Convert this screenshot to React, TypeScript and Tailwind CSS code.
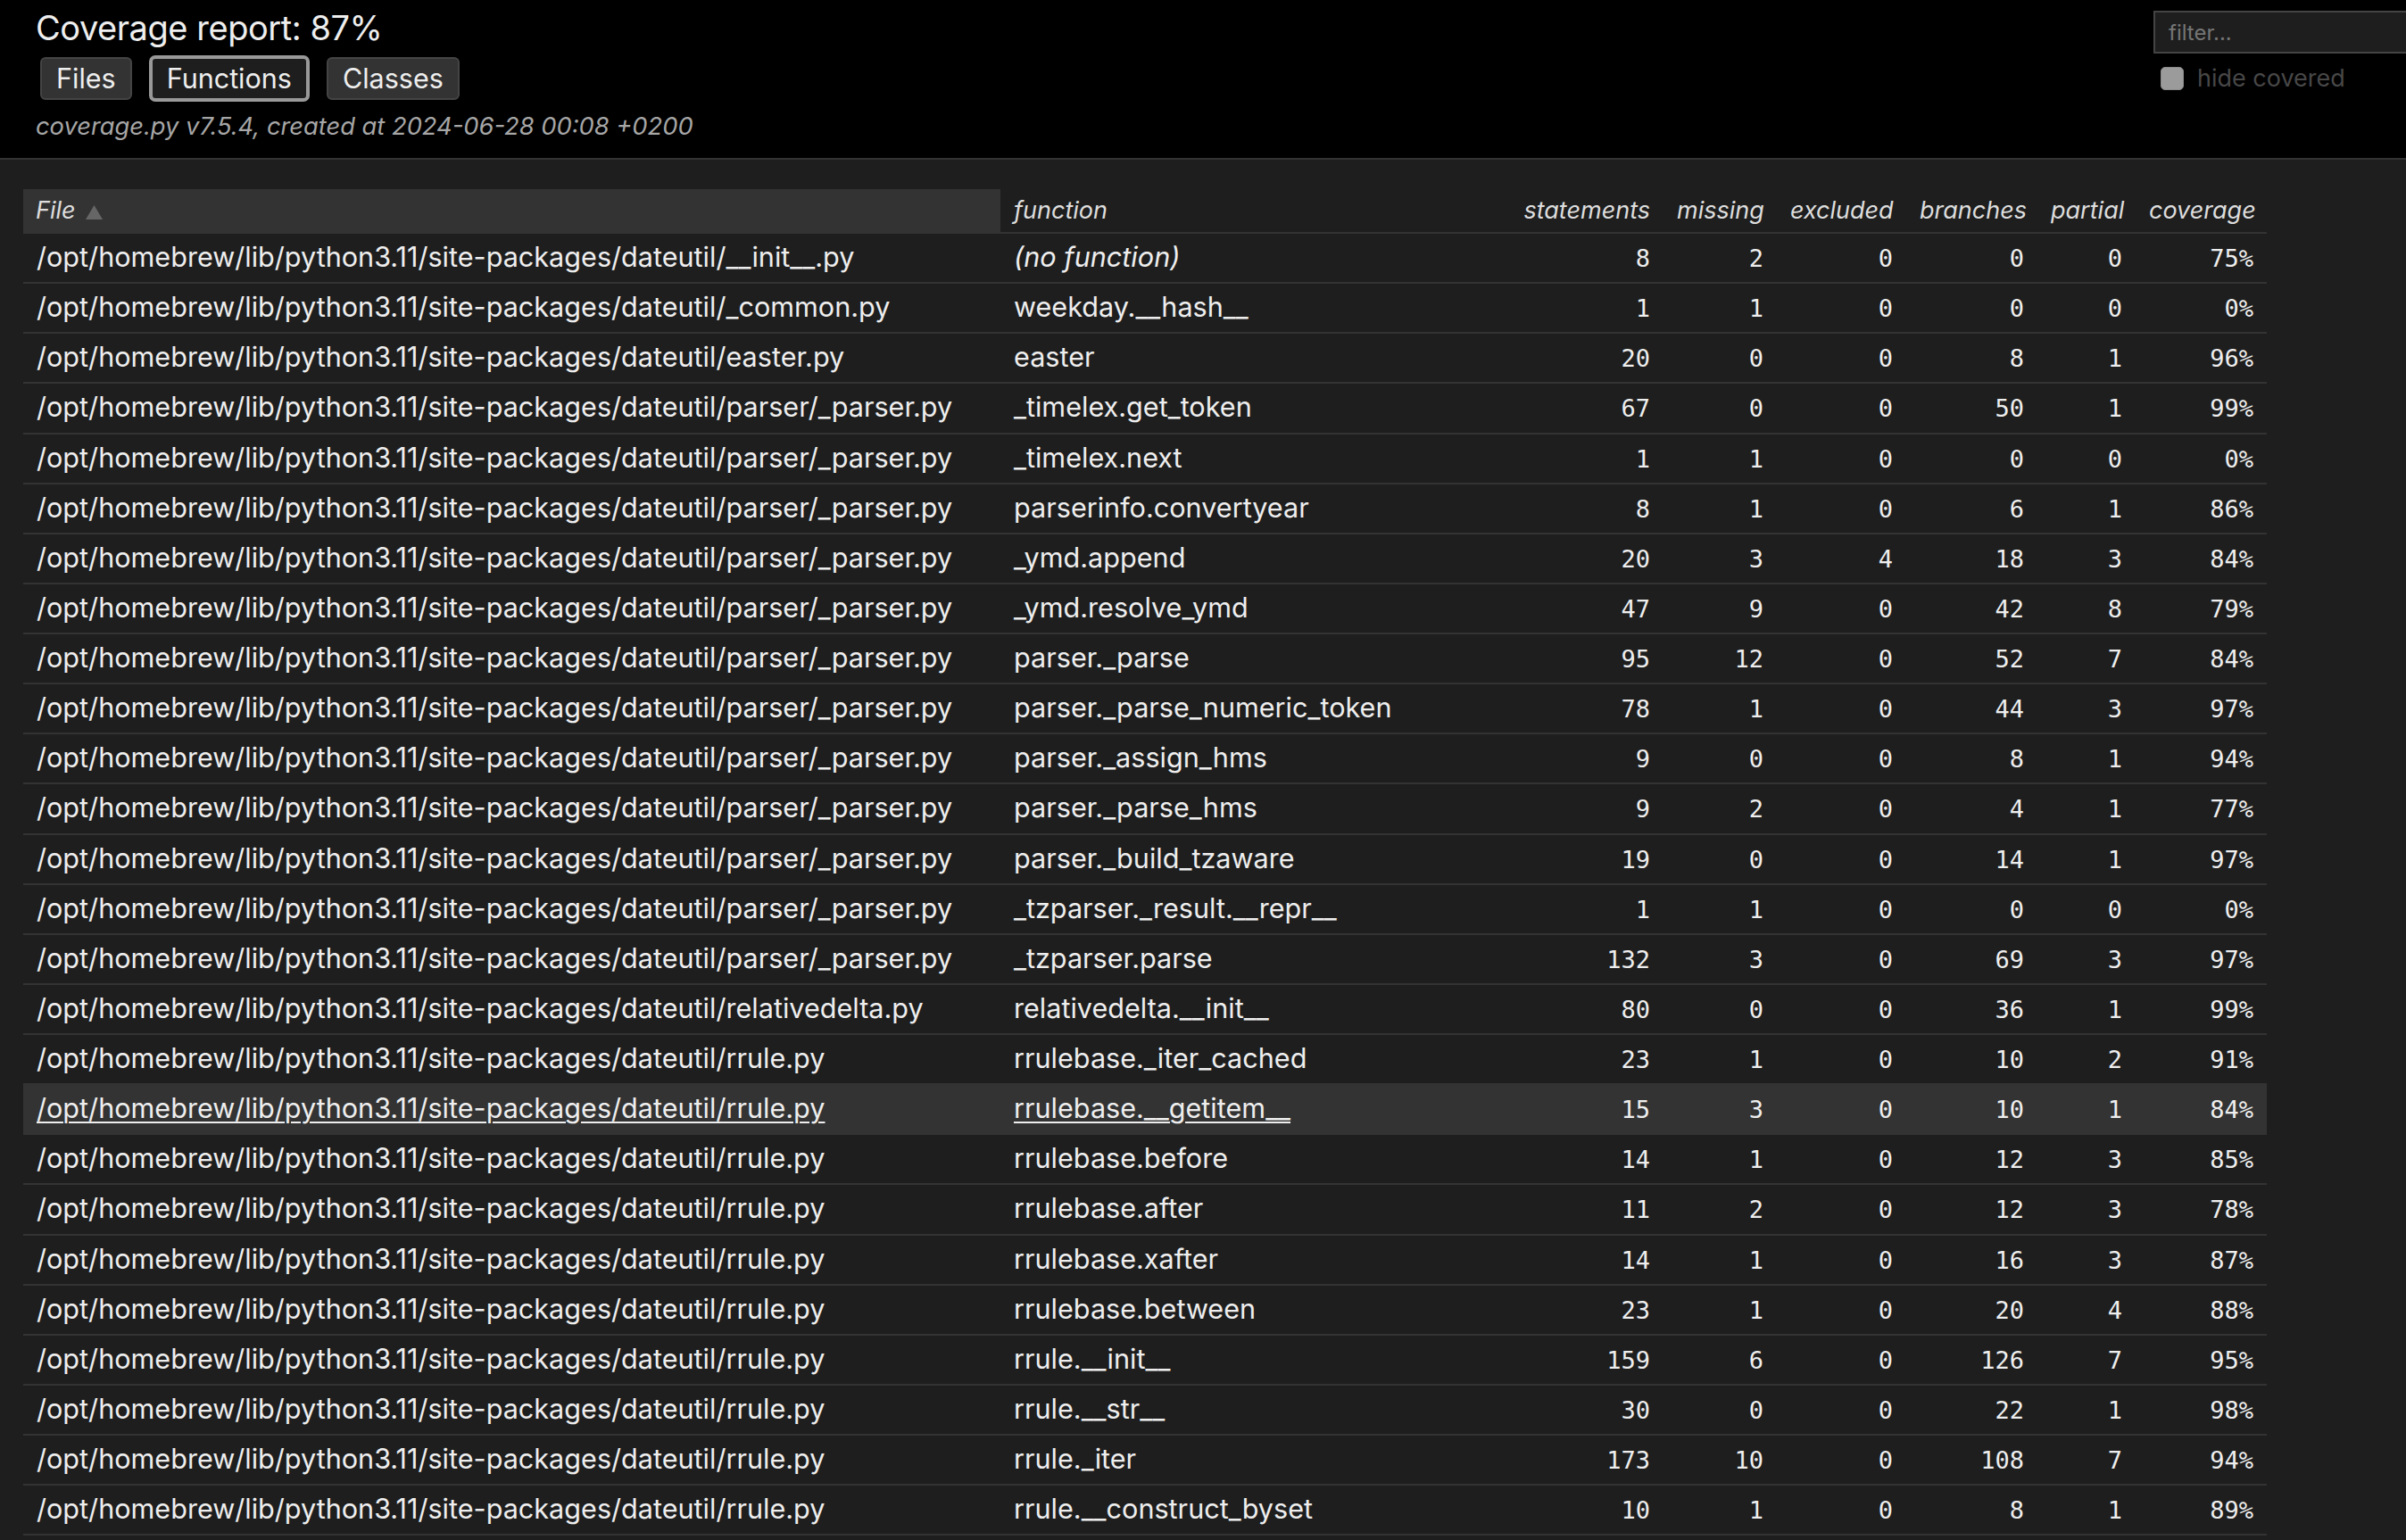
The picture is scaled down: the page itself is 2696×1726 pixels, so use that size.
import React from "react";

const BASE = "/opt/homebrew/lib/python3.11/site-packages/dateutil/";

type Row = {
  file: string;
  fn: string;
  nums: [number, number, number, number, number];
  cov: string;
  italic?: boolean;
  hover?: boolean;
};

const rows: Row[] = [
  { file: "__init__.py", fn: "(no function)", nums: [8, 2, 0, 0, 0], cov: "75%", italic: true },
  { file: "_common.py", fn: "weekday.__hash__", nums: [1, 1, 0, 0, 0], cov: "0%" },
  { file: "easter.py", fn: "easter", nums: [20, 0, 0, 8, 1], cov: "96%" },
  { file: "parser/_parser.py", fn: "_timelex.get_token", nums: [67, 0, 0, 50, 1], cov: "99%" },
  { file: "parser/_parser.py", fn: "_timelex.next", nums: [1, 1, 0, 0, 0], cov: "0%" },
  { file: "parser/_parser.py", fn: "parserinfo.convertyear", nums: [8, 1, 0, 6, 1], cov: "86%" },
  { file: "parser/_parser.py", fn: "_ymd.append", nums: [20, 3, 4, 18, 3], cov: "84%" },
  { file: "parser/_parser.py", fn: "_ymd.resolve_ymd", nums: [47, 9, 0, 42, 8], cov: "79%" },
  { file: "parser/_parser.py", fn: "parser._parse", nums: [95, 12, 0, 52, 7], cov: "84%" },
  { file: "parser/_parser.py", fn: "parser._parse_numeric_token", nums: [78, 1, 0, 44, 3], cov: "97%" },
  { file: "parser/_parser.py", fn: "parser._assign_hms", nums: [9, 0, 0, 8, 1], cov: "94%" },
  { file: "parser/_parser.py", fn: "parser._parse_hms", nums: [9, 2, 0, 4, 1], cov: "77%" },
  { file: "parser/_parser.py", fn: "parser._build_tzaware", nums: [19, 0, 0, 14, 1], cov: "97%" },
  { file: "parser/_parser.py", fn: "_tzparser._result.__repr__", nums: [1, 1, 0, 0, 0], cov: "0%" },
  { file: "parser/_parser.py", fn: "_tzparser.parse", nums: [132, 3, 0, 69, 3], cov: "97%" },
  { file: "relativedelta.py", fn: "relativedelta.__init__", nums: [80, 0, 0, 36, 1], cov: "99%" },
  { file: "rrule.py", fn: "rrulebase._iter_cached", nums: [23, 1, 0, 10, 2], cov: "91%" },
  { file: "rrule.py", fn: "rrulebase.__getitem__", nums: [15, 3, 0, 10, 1], cov: "84%", hover: true },
  { file: "rrule.py", fn: "rrulebase.before", nums: [14, 1, 0, 12, 3], cov: "85%" },
  { file: "rrule.py", fn: "rrulebase.after", nums: [11, 2, 0, 12, 3], cov: "78%" },
  { file: "rrule.py", fn: "rrulebase.xafter", nums: [14, 1, 0, 16, 3], cov: "87%" },
  { file: "rrule.py", fn: "rrulebase.between", nums: [23, 1, 0, 20, 4], cov: "88%" },
  { file: "rrule.py", fn: "rrule.__init__", nums: [159, 6, 0, 126, 7], cov: "95%" },
  { file: "rrule.py", fn: "rrule.__str__", nums: [30, 0, 0, 22, 1], cov: "98%" },
  { file: "rrule.py", fn: "rrule._iter", nums: [173, 10, 0, 108, 7], cov: "94%" },
  { file: "rrule.py", fn: "rrule.__construct_byset", nums: [10, 1, 0, 8, 1], cov: "89%" },
];

const GRID =
  "grid grid-cols-[1095px_571px_172px_127px_145px_147px_110px_147px] w-[2514px]";

function HeaderButton({ label, current }: { label: string; current?: boolean }) {
  return current ? (
    <span className="h-[52px] border-[4px] border-[#999] bg-[#1e1e1e] rounded-[7px] px-[16px] text-[30.5px] leading-[44px] text-[#eee]">
      {label}
    </span>
  ) : (
    <span className="h-[48px] border-2 border-[#444] bg-[#333] rounded-[6px] px-[16px] text-[30.5px] leading-[44px] text-[#eee]">
      {label}
    </span>
  );
}

export default function App() {
  const numHeads = ["statements", "missing", "excluded", "branches", "partial", "coverage"];
  return (
    <div className="w-[2696px] min-h-[1726px] overflow-hidden bg-[#1e1e1e] text-[#eee] font-['Inter','Liberation_Sans',sans-serif]">
      <header className="h-[179px] bg-black border-b-2 border-[#333] flex">
        <div className="flex-1 pl-[40px] pt-[7px]">
          <h1 className="text-[38px] leading-[48px] tracking-[-0.012em]">Coverage report: 87%</h1>
          <div className="mt-[7px] ml-[5px] flex items-center gap-[19px]">
            <HeaderButton label="Files" />
            <HeaderButton label="Functions" current />
            <HeaderButton label="Classes" />
          </div>
          <p className="mt-[10px] italic text-[27.3px] leading-[36px] text-[#a6a6a6]">
            coverage.py v7.5.4, created at 2024-06-28 00:08 +0200
          </p>
        </div>
        <div className="w-[283px] shrink-0 overflow-hidden pt-[12px]">
          <input
            readOnly
            placeholder="filter..."
            className="block w-[360px] h-[48px] border-2 border-[#444] bg-[#1e1e1e] px-[15px] text-[24px] text-[#eee] placeholder:text-[#757575] outline-none"
          />
          <div className="mt-[12px] ml-[8px] flex items-center gap-[15px]">
            <span className="w-[26px] h-[26px] rounded-[5px] bg-[#9b9b9b] border border-[#8a8a8a] shrink-0" />
            <span className="text-[27px] leading-[32px] text-[#474747]">hide covered</span>
          </div>
        </div>
      </header>

      <main className="pt-[33px] pl-[26px]">
        <div className={`${GRID} h-[50px] border-b-2 border-[#333] text-[27px] leading-[48px] italic text-[#ddd]`}>
          <div className="bg-[#333] px-[14px] whitespace-nowrap">
            File
            <svg width="19" height="16" viewBox="0 0 19 16" className="inline-block ml-[11px]">
              <polygon points="9.5,0 19,16 0,16" fill="#666" />
            </svg>
          </div>
          <div className="px-[15px]">function</div>
          {numHeads.map((h) => (
            <div key={h} className="px-[15px] text-right">
              {h}
            </div>
          ))}
        </div>

        {rows.map((r, i) => (
          <div
            key={i}
            className={`${GRID} h-[56.14px] border-b-2 border-[#333] items-baseline ${
              r.hover ? "bg-[#333]" : ""
            }`}
          >
            <div
              className={`px-[15px] text-[30.6px] leading-[51px] whitespace-nowrap ${
                r.hover ? "underline decoration-2 underline-offset-[4px]" : ""
              }`}
            >
              {BASE + r.file}
            </div>
            <div
              className={`px-[15px] text-[30.6px] leading-[51px] whitespace-nowrap ${r.italic ? "italic" : ""} ${
                r.hover ? "underline decoration-2 underline-offset-[4px]" : ""
              }`}
            >
              {r.fn}
            </div>
            {r.nums.map((n, j) => (
              <div
                key={j}
                className="px-[15px] text-right text-[27px] leading-[32px] font-['DejaVu_Sans_Mono',monospace]"
              >
                {n}
              </div>
            ))}
            <div className="px-[15px] text-right text-[27px] leading-[32px] font-['DejaVu_Sans_Mono',monospace]">
              {r.cov}
            </div>
          </div>
        ))}
      </main>
    </div>
  );
}
